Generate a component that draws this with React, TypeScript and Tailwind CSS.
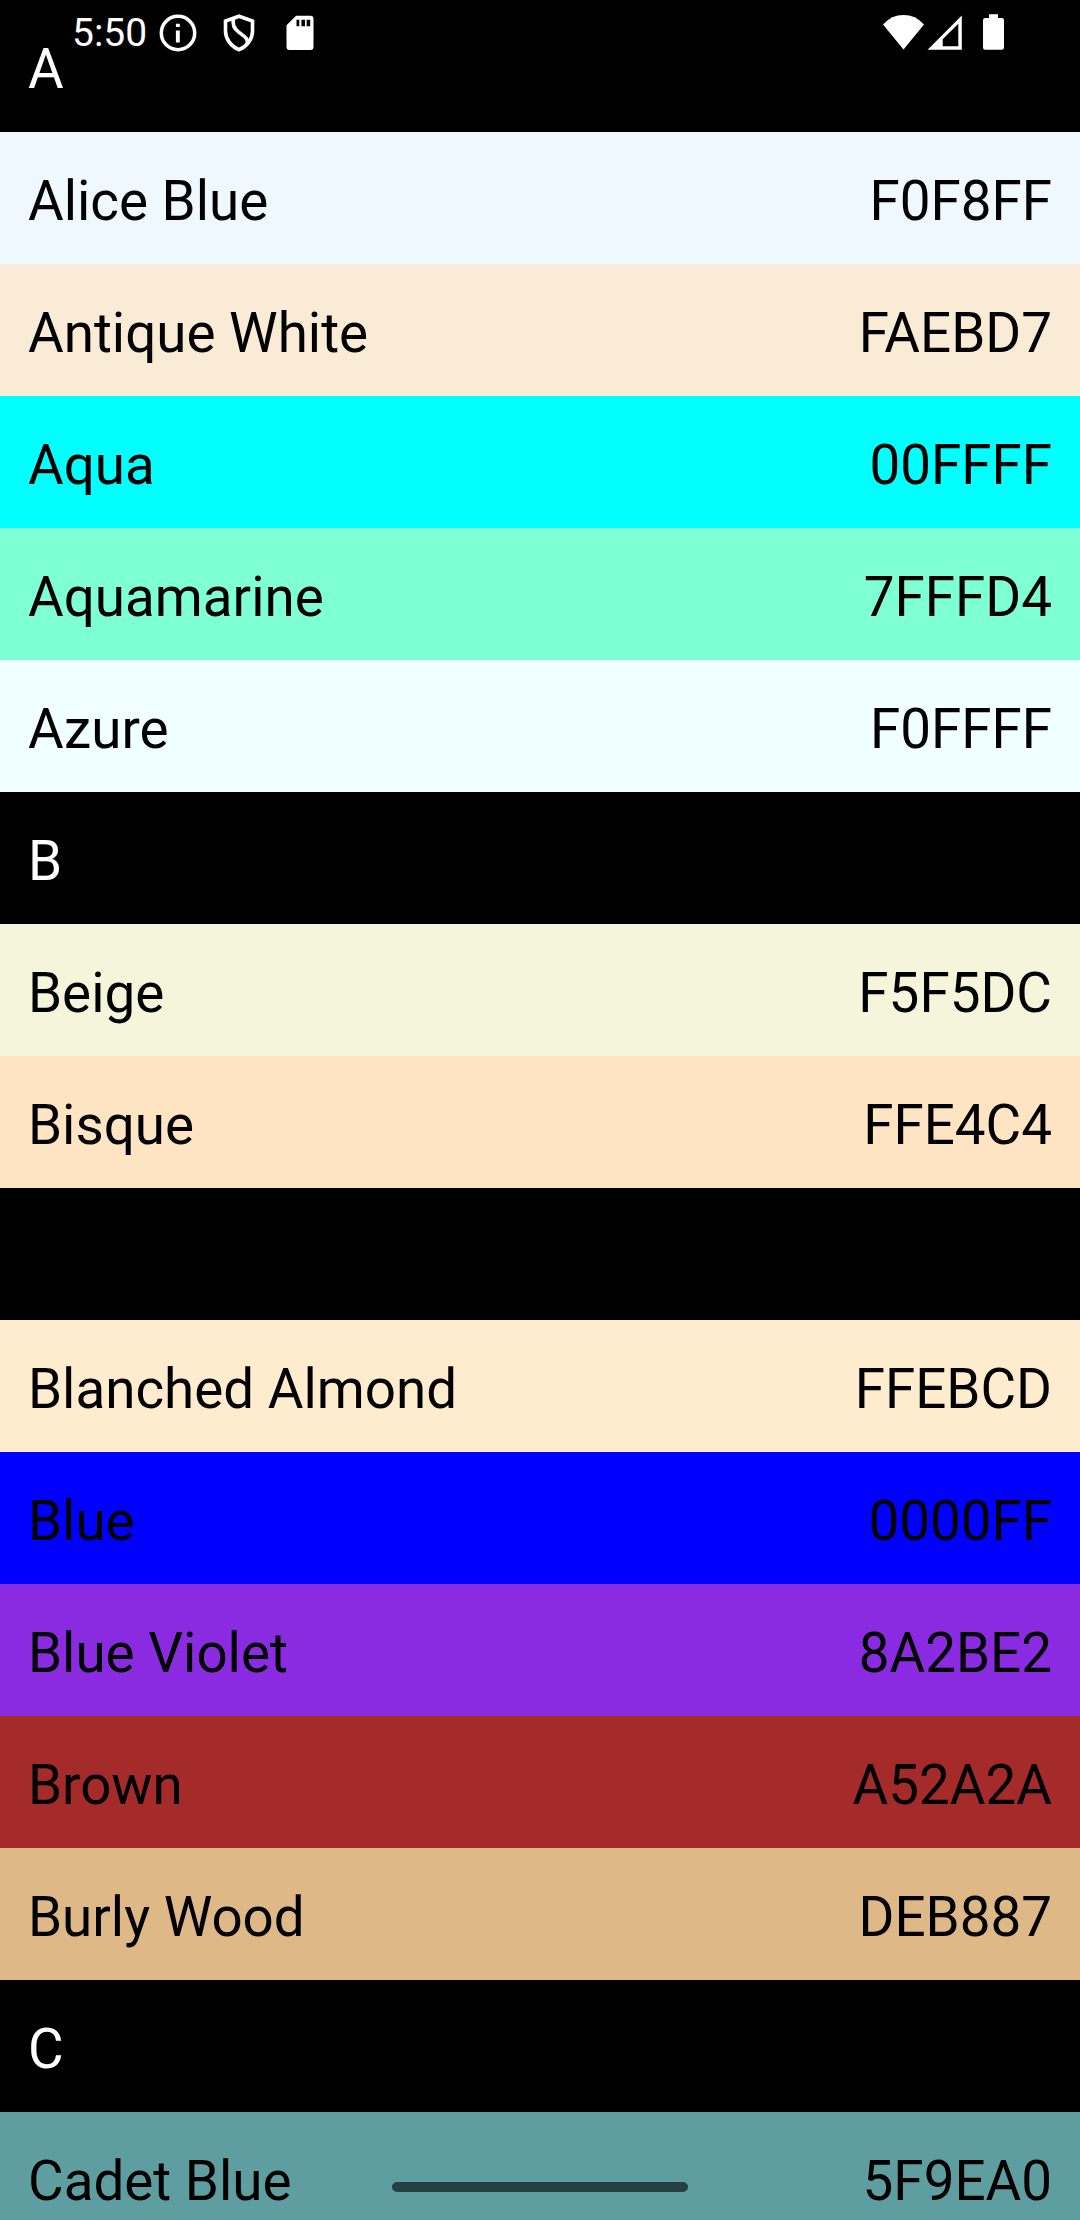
type Row = { name: string; hex?: string; bg: string; light?: boolean };

const rows: Row[] = [
  { name: "A", bg: "bg-black", light: true },
  { name: "Alice Blue", hex: "F0F8FF", bg: "bg-[#f0f8ff]" },
  { name: "Antique White", hex: "FAEBD7", bg: "bg-[#faebd7]" },
  { name: "Aqua", hex: "00FFFF", bg: "bg-[#00ffff]" },
  { name: "Aquamarine", hex: "7FFFD4", bg: "bg-[#7fffd4]" },
  { name: "Azure", hex: "F0FFFF", bg: "bg-[#f0ffff]" },
  { name: "B", bg: "bg-black", light: true },
  { name: "Beige", hex: "F5F5DC", bg: "bg-[#f5f5dc]" },
  { name: "Bisque", hex: "FFE4C4", bg: "bg-[#ffe4c4]" },
  { name: "", bg: "bg-black" },
  { name: "Blanched Almond", hex: "FFEBCD", bg: "bg-[#ffebcd]" },
  { name: "Blue", hex: "0000FF", bg: "bg-[#0000ff]" },
  { name: "Blue Violet", hex: "8A2BE2", bg: "bg-[#8a2be2]" },
  { name: "Brown", hex: "A52A2A", bg: "bg-[#a52a2a]" },
  { name: "Burly Wood", hex: "DEB887", bg: "bg-[#deb887]" },
  { name: "C", bg: "bg-black", light: true },
  { name: "Cadet Blue", hex: "5F9EA0", bg: "bg-[#5f9ea0]" },
];

function ColorRow({ row }: { row: Row }) {
  return (
    <div
      className={`flex h-[132px] items-center justify-between px-7 pt-1.5 text-[54.75px] leading-[54px] ${row.bg} ${
        row.light ? "text-white" : "text-black"
      }`}
    >
      <span>{row.name}</span>
      {row.hex && <span>{row.hex}</span>}
    </div>
  );
}

function InfoIcon() {
  return (
    <svg className="size-11" viewBox="0 0 44 44" fill="none">
      <circle cx="22" cy="22" r="16.7" stroke="white" strokeWidth="3.5" />
      <path d="M19.9 12.7h3.9v3.2h-3.9zM19.9 19.6h3.9v12h-3.9z" fill="white" />
    </svg>
  );
}

function ShieldIcon() {
  return (
    <svg className="size-11" viewBox="0 0 44 44" fill="none" stroke="white" strokeWidth="3.6">
      <path d="M22 5.2L35.5 10.1V20.2C35.5 28 30.2 35.2 22 38.7C13.8 35.2 8.5 28 8.5 20.2V10.1Z" />
      <path d="M16.6 7.4C15.1 13.2 16.6 17.2 21.4 20.9C27.4 25.6 31.4 27.2 30.2 32.6" />
    </svg>
  );
}

function SdCardIcon() {
  return (
    <svg className="size-11" viewBox="0 0 44 44">
      <path
        fill="white"
        fillRule="evenodd"
        d="M18 4.7H32.5Q35.5 4.7 35.5 7.7V36Q35.5 39 32.5 39H11.5Q8.5 39 8.5 36V14.3ZM18.5 8.7V15.3H21.3V8.7ZM23.4 8.7V15.3H27V8.7ZM28.6 8.7V15.3H32.2V8.7Z"
      />
    </svg>
  );
}

function StatusBar() {
  return (
    <div className="absolute inset-x-0 top-0 flex h-[66px] items-start justify-between pr-[76px] pl-[72px] text-white">
      <div className="flex items-start">
        <span className="mt-2.5 w-[83.5px] text-[39px] leading-[46px]">5:50</span>
        <div className="mt-[11.4px] flex gap-[17px]">
          <InfoIcon />
          <ShieldIcon />
          <SdCardIcon />
        </div>
      </div>
      <div className="mt-3.5 flex items-start">
        <svg className="mr-[3px] h-9 w-[42px]" viewBox="0 0 42 36" fill="white">
          <path d="M21.5 35.4L1 10.4Q9.5 1 21.5 1T42 10.4Z" />
        </svg>
        <svg className="mr-5 h-9 w-[35px]" viewBox="0 0 35 36" fill="white">
          <path fillRule="evenodd" d="M0.6 35.8L34.8 1.4V35.8ZM15.7 25.3V32.3H31.3V9.7Z" />
        </svg>
        <svg className="h-9 w-[22px]" viewBox="0 0 22 36" fill="white">
          <path d="M7 0.3H16V4H19.8Q22 4 22 6.2V33.5Q22 35.7 19.8 35.7H3.2Q1 35.7 1 33.5V6.2Q1 4 3.2 4H7Z" />
        </svg>
      </div>
    </div>
  );
}

export default function App() {
  return (
    <div className="relative h-[2220px] w-[1080px] overflow-hidden bg-black font-['Roboto',sans-serif]">
      {rows.map((row, i) => (
        <ColorRow key={i} row={row} />
      ))}
      <StatusBar />
      <div className="absolute top-[2182px] left-[392px] h-2.5 w-[296px] rounded-full bg-black/60" />
    </div>
  );
}
